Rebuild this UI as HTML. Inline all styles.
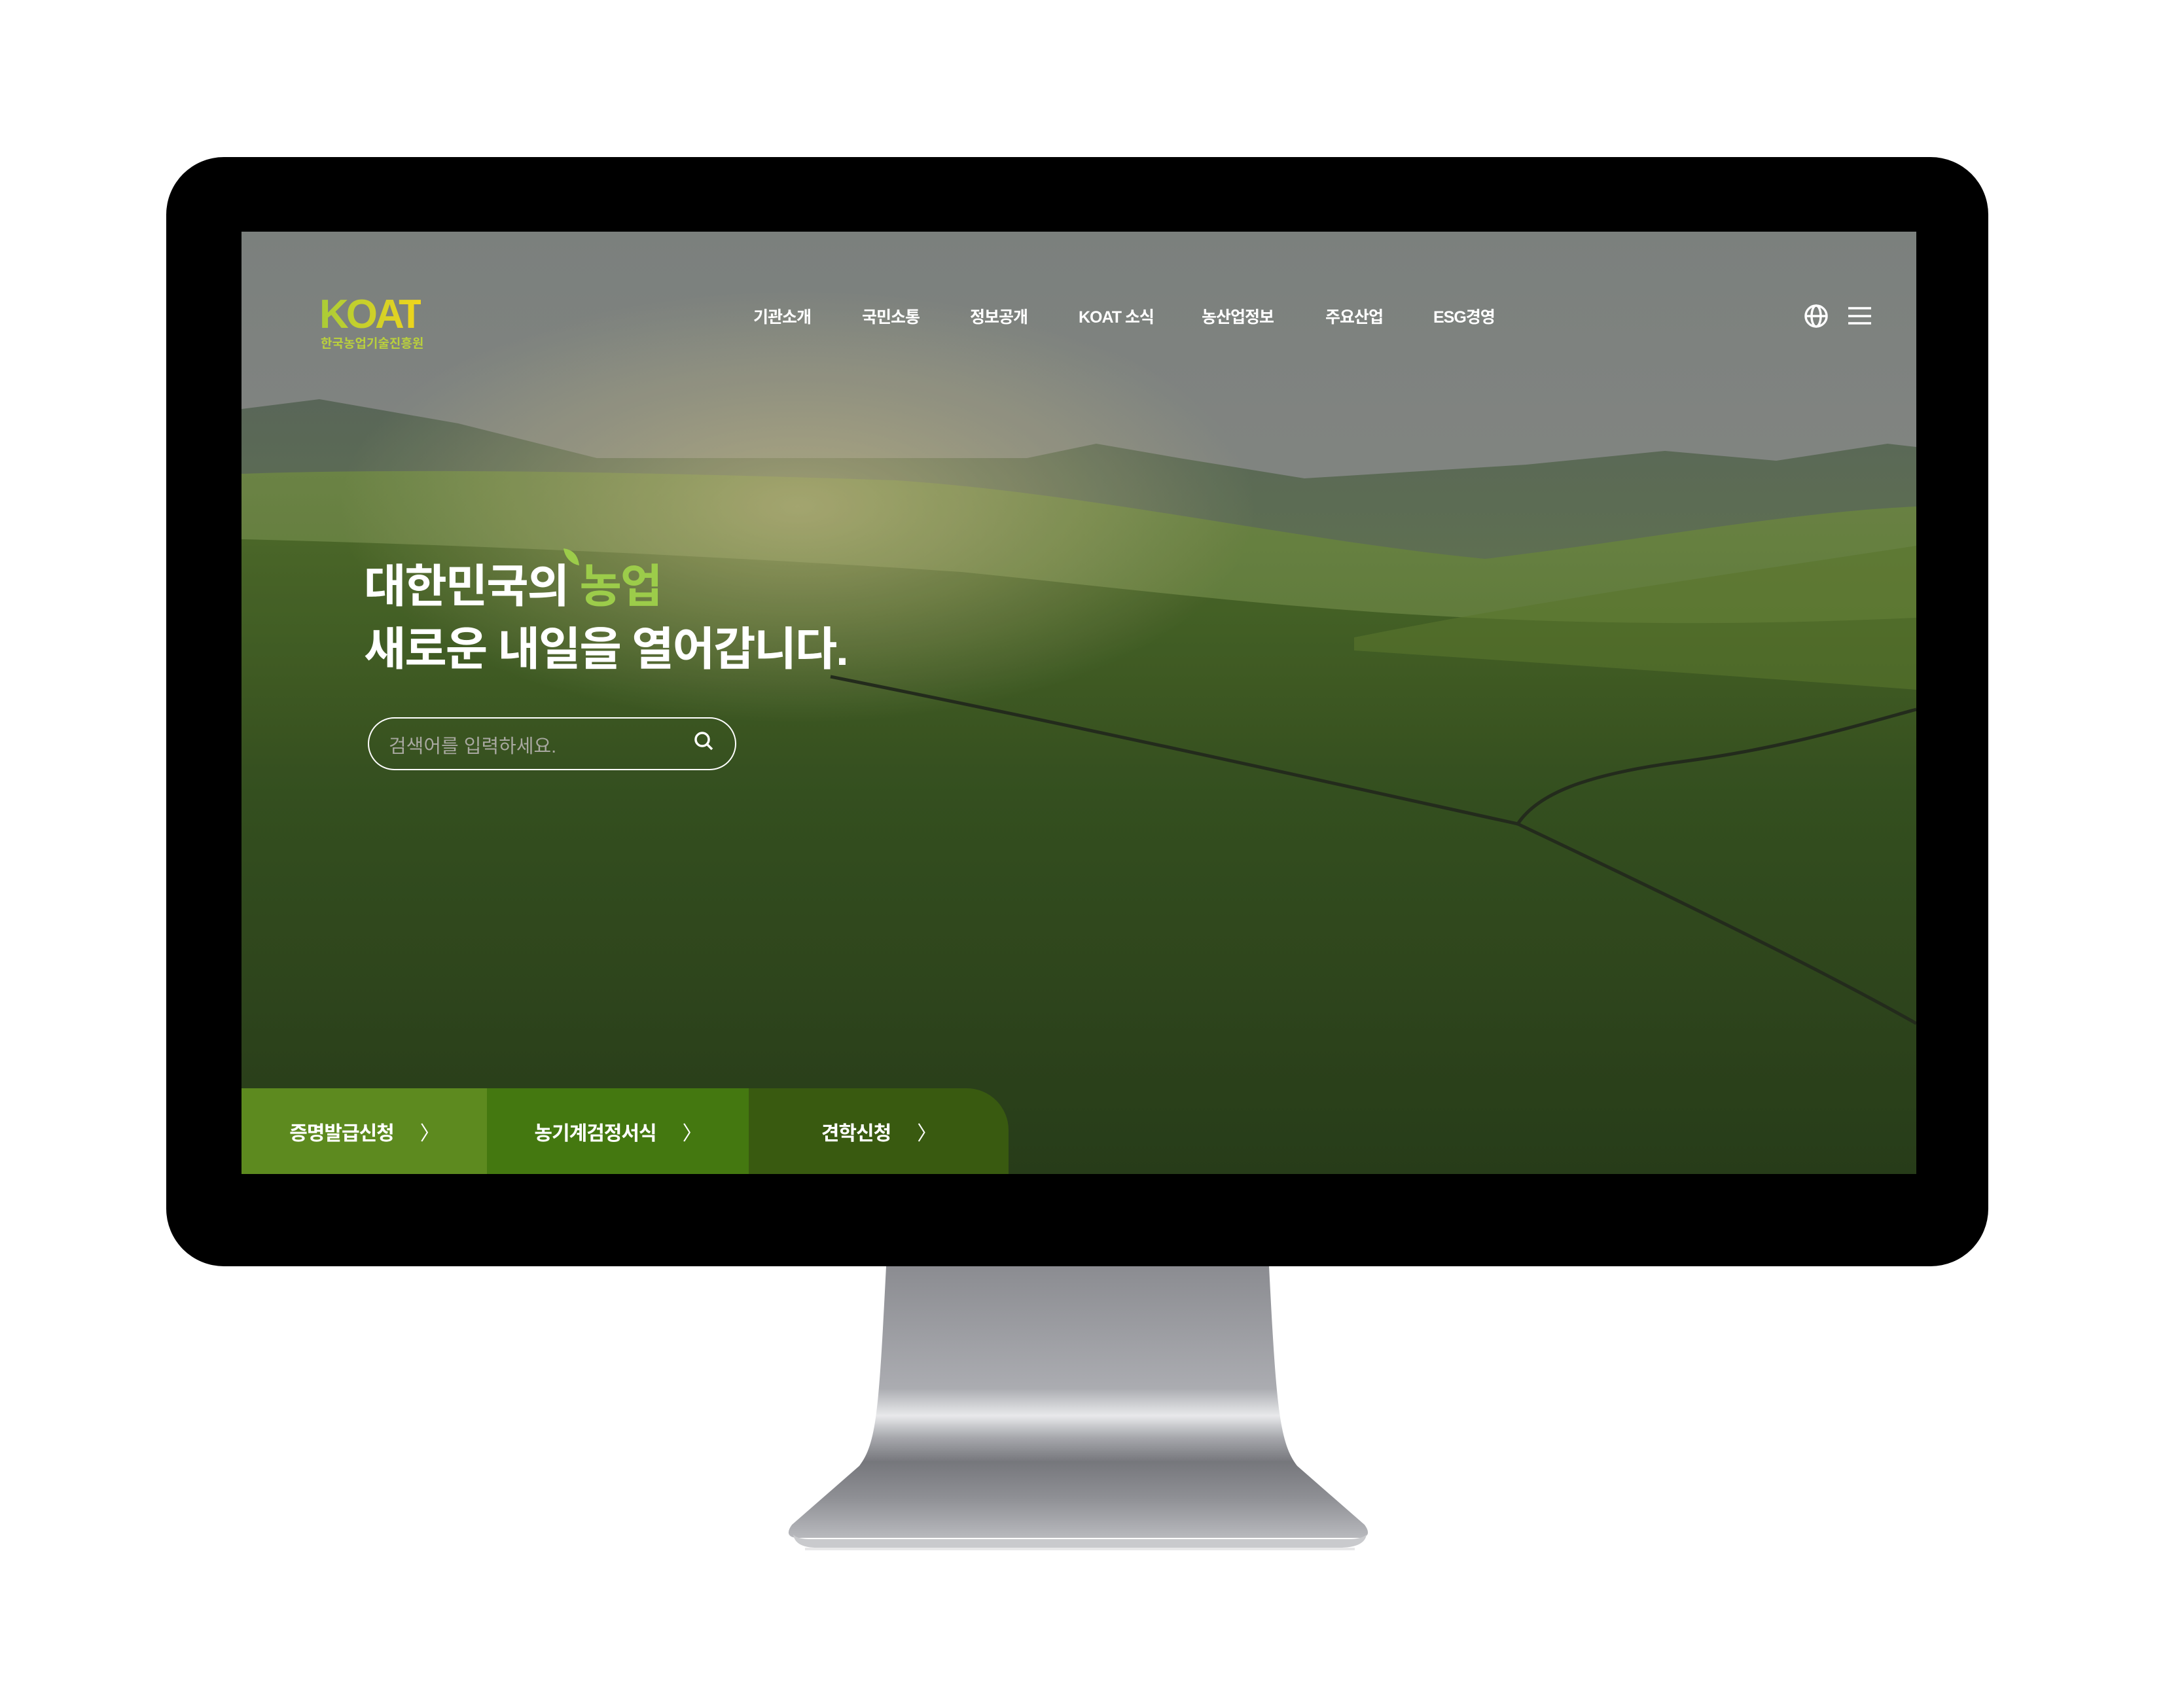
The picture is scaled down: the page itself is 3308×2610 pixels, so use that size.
<!DOCTYPE html>
<html><head><meta charset="utf-8"><style>
html,body{margin:0;padding:0;background:#fff;width:3308px;height:2610px;overflow:hidden;position:relative;font-family:"Liberation Sans","Noto Sans CJK KR",sans-serif}
.bezel{position:absolute;left:254px;top:240px;width:2784px;height:1695px;background:#000;border-radius:88px}
.screen{position:absolute;left:369px;top:354px;width:2559px;height:1440px;overflow:hidden;background:#2f4520}
.abs{position:absolute}
.nav{position:absolute;top:111px;color:#fff;font-weight:bold;font-size:25px;white-space:nowrap;letter-spacing:-1px}
.btn{position:absolute;top:1663px;height:131px;color:#fff;font-weight:bold;font-size:30px;display:flex;align-items:center;justify-content:center;letter-spacing:-1px}
.btn span{margin-left:40px;font-weight:normal;font-size:30px}
</style></head><body>
<div class="bezel"></div>
<div class="screen">
<svg width="2559" height="1440" viewBox="0 0 2559 1440" preserveAspectRatio="none" style="position:absolute;left:0;top:0">
<defs>
<linearGradient id="sky" x1="0" y1="0" x2="0" y2="1">
<stop offset="0" stop-color="#838985"/><stop offset="0.5" stop-color="#8f918d"/><stop offset="1" stop-color="#999994"/></linearGradient>
<linearGradient id="far" x1="0" y1="0" x2="0" y2="1"><stop offset="0" stop-color="#5f6d5e"/><stop offset="1" stop-color="#667a55"/></linearGradient>
<linearGradient id="mid" x1="0" y1="0" x2="0" y2="1"><stop offset="0" stop-color="#728c4a"/><stop offset="1" stop-color="#5a7832"/></linearGradient>
<linearGradient id="fg" x1="0" y1="0" x2="0" y2="1"><stop offset="0" stop-color="#4f6d2b"/><stop offset="0.4" stop-color="#385421"/><stop offset="1" stop-color="#2a401b"/></linearGradient>
<radialGradient id="sun" cx="0.5" cy="0.5" r="0.5"><stop offset="0" stop-color="#c9c08a" stop-opacity="0.7"/><stop offset="1" stop-color="#c9c08a" stop-opacity="0"/></radialGradient>
</defs>
<rect width="2559" height="1440" fill="url(#sky)"/>
<path d="M0,271 L119,256 L331,293 L543,346 L1200,346 L1306,324 L1433,346 L1624,377 L1963,356 L2175,335 L2345,350 L2515,324 L2559,329 L2559,600 L0,600Z" fill="url(#far)"/>
<path d="M0,370 C300,360 700,370 1000,380 C1300,400 1600,470 1900,500 C2150,470 2350,430 2559,420 L2559,900 L0,900Z" fill="url(#mid)"/>
<path d="M0,470 C400,480 800,500 1100,520 C1500,560 1900,620 2559,590 L2559,1440 L0,1440Z" fill="url(#fg)"/>
<path d="M1700,620 C2000,560 2300,520 2559,480 L2559,700 C2300,680 2000,660 1700,640Z" fill="#5f7d30" opacity="0.6"/>
<ellipse cx="850" cy="420" rx="700" ry="330" fill="url(#sun)"/>
<path d="M900,680 C1300,760 1700,850 1950,905 C1980,860 2050,830 2200,810 C2350,790 2450,760 2559,730" stroke="#262e1e" stroke-width="5" fill="none"/>
<path d="M1950,905 C2150,1000 2400,1120 2559,1210" stroke="#262e1e" stroke-width="5" fill="none"/>
<rect width="2559" height="1440" fill="#000" opacity="0.06"/>
</svg>
<div class="abs" style="left:119px;top:96px;font-size:62px;font-weight:bold;letter-spacing:-4px;line-height:62px;background:linear-gradient(90deg,#a9cc37,#f0d51c);-webkit-background-clip:text;color:transparent">KOAT</div>
<div class="abs" style="left:121px;top:156px;font-size:19px;font-weight:bold;color:#b9cf3d">한국농업기술진흥원</div>
<div class="nav" style="left:782px">기관소개</div>
<div class="nav" style="left:948px">국민소통</div>
<div class="nav" style="left:1113px">정보공개</div>
<div class="nav" style="left:1279px">KOAT 소식</div>
<div class="nav" style="left:1467px">농산업정보</div>
<div class="nav" style="left:1656px">주요산업</div>
<div class="nav" style="left:1821px">ESG경영</div>
<svg class="abs" style="left:2385px;top:110px" width="110" height="40" viewBox="0 0 110 40">
<circle cx="21" cy="19" r="16" fill="none" stroke="#fff" stroke-width="3.5"/>
<ellipse cx="21" cy="19" rx="7" ry="16" fill="none" stroke="#fff" stroke-width="3.5"/>
<line x1="5" y1="19" x2="37" y2="19" stroke="#fff" stroke-width="3.5"/>
<path d="M70 7H105M70 19H105M70 30H105" stroke="#fff" stroke-width="3.5"/>
</svg>
<div class="abs" style="left:187px;top:494px;color:#fff;font-weight:bold;font-size:70px;line-height:96px;letter-spacing:-2px;white-space:nowrap">대한민국의 <span style="color:#9ccc4a">농업</span><br>새로운 내일을 열어갑니다.</div>
<svg class="abs" style="left:486px;top:480px" width="40" height="40" viewBox="0 0 40 40"><path d="M6 4 C20 6 28 14 30 30 C18 28 8 18 6 4Z" fill="#9ccc4a"/></svg>
<div class="abs" style="left:193px;top:742px;width:563px;height:81px;border:2.5px solid #fff;border-radius:42px;box-sizing:border-box"></div>
<div class="abs" style="left:225px;top:763px;font-size:29px;color:#a8a8a0">검색어를 입력하세요.</div>
<svg class="abs" style="left:688px;top:760px" width="40" height="40" viewBox="0 0 40 40"><circle cx="16" cy="16" r="10" fill="none" stroke="#fff" stroke-width="3.5"/><line x1="23" y1="23" x2="31" y2="31" stroke="#fff" stroke-width="3.5"/></svg>
</div>
<div class="btn" style="left:369px;width:375px;background:#5d8a1f">증명발급신청<span>〉</span></div>
<div class="btn" style="left:744px;width:400px;background:#447810">농기계검정서식<span>〉</span></div>
<div class="btn" style="left:1144px;width:397px;background:#395a10;border-top-right-radius:64px">견학신청<span>〉</span></div>
<svg class="abs" style="left:0;top:0" width="3308" height="2610" viewBox="0 0 3308 2610">
<defs>
<linearGradient id="stand" x1="0" y1="1935" x2="0" y2="2350" gradientUnits="userSpaceOnUse">
<stop offset="0" stop-color="#8b8c91"/><stop offset="0.45" stop-color="#abacb1"/><stop offset="0.55" stop-color="#e8e9eb"/><stop offset="0.63" stop-color="#a7a8ad"/><stop offset="0.72" stop-color="#76777c"/><stop offset="0.85" stop-color="#8e8f94"/><stop offset="1" stop-color="#b8b9bd"/></linearGradient>
</defs>
<path d="M1354,1935 L1939,1935 C1950,2150 1955,2205 1982,2240 L2085,2330 Q2098,2348 2078,2350 L1217,2350 Q1197,2348 1210,2330 L1313,2240 C1340,2205 1343,2150 1354,1935Z" fill="url(#stand)"/>
<path d="M1212,2345 Q1215,2364 1245,2365 L2050,2365 Q2085,2364 2088,2345 Q2080,2352 2060,2352 L1240,2352 Q1218,2352 1212,2345Z" fill="#c9cacd"/>
<rect x="1230" y="2365" width="840" height="4" fill="#d8d8da" opacity="0.6"/>
</svg>
</body></html>
